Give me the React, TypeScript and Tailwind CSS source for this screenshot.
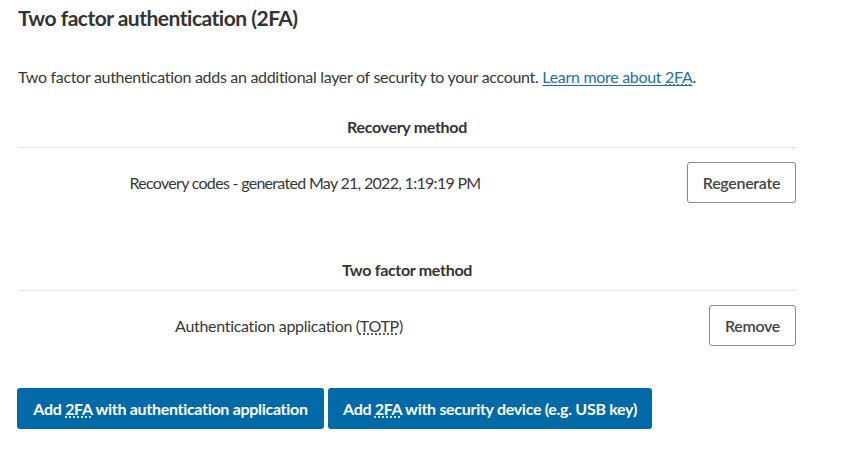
export default function App() {
  return (
    <div className="min-h-screen bg-white pl-[18px] pt-[3px] text-[#333] font-['Lato','Open_Sans',sans-serif] tracking-[-0.3px]">
      <h2 className="text-[21px] leading-[30px] font-bold tracking-[-0.5px]">Two factor authentication (2FA)</h2>

      <p className="mt-[32px] text-[16px] leading-[24px] text-[#383838]">
        Two factor authentication adds an additional layer of security to your account.{" "}
        <a href="#" className="text-[#1f6fa8] underline underline-offset-2">
          Learn more about <abbr className="no-underline decoration-dotted underline underline-offset-2">2FA</abbr>
        </a>
        .
      </p>

      {/* RECOVERY */}
      <div className="w-[778px] mt-[17px]">
        <div className="h-[42px] flex items-center justify-center border-b border-[#e6e6e6] font-bold text-[16px]">
          Recovery method
        </div>
        <div className="flex items-center h-[69px]">
          <div className="w-[574px] text-center text-[16px] text-[#383838] tracking-[-0.7px]">
            Recovery codes - generated May 21, 2022, 1:19:19 PM
          </div>
          <div className="flex-1 flex justify-end">
            <button className="h-[41px] w-[109px] border border-[#8a8a8a] rounded-[3px] bg-white text-[16px] font-semibold text-[#444]">
              Regenerate
            </button>
          </div>
        </div>
      </div>

      {/* 2FA METHOD */}
      <div className="w-[778px] mt-[32px]">
        <div className="h-[42px] flex items-center justify-center border-b border-[#e6e6e6] font-bold text-[16px]">
          Two factor method
        </div>
        <div className="flex items-center h-[69px]">
          <div className="w-[542px] text-center text-[16px] text-[#383838]">
            Authentication application (<abbr className="underline decoration-dotted underline-offset-2">TOTP</abbr>)
          </div>
          <div className="flex-1 flex justify-end">
            <button className="h-[41px] w-[87px] border border-[#8a8a8a] rounded-[3px] bg-white text-[16px] font-semibold text-[#444]">
              Remove
            </button>
          </div>
        </div>
      </div>

      <div className="flex gap-[4px] mt-[28px] -ml-px">
        <button className="h-[41px] w-[307px] rounded-[3px] bg-[#006aa8] text-white font-bold text-[16px]">
          Add <abbr className="underline decoration-dotted underline-offset-2">2FA</abbr> with authentication application
        </button>
        <button className="h-[41px] w-[324px] rounded-[3px] bg-[#006aa8] text-white font-bold text-[16px]">
          Add <abbr className="underline decoration-dotted underline-offset-2">2FA</abbr> with security device (e.g. USB key)
        </button>
      </div>
    </div>
  );
}
